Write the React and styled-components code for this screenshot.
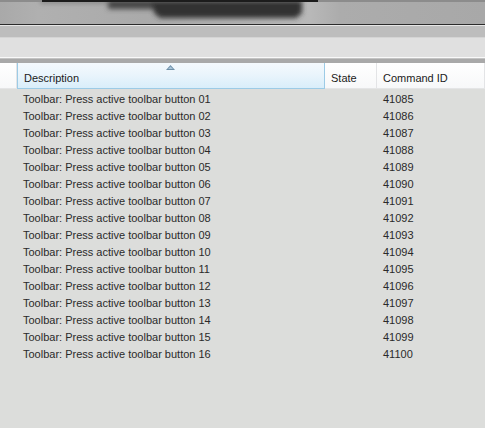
import React from "react";
import styled, { createGlobalStyle } from "styled-components";

const GlobalStyle = createGlobalStyle`
  html, body {
    margin: 0;
    padding: 0;
    background: #dcdddb;
  }
  body {
    font-family: "Liberation Sans", Arial, sans-serif;
  }
`;

const Window = styled.div`
  width: 485px;
  height: 428px;
  display: flex;
  flex-direction: column;
  background: #dcdddb;
  overflow: hidden;
`;

const TopEdge = styled.div`
  height: 2px;
  display: flex;
  background: #8c8c8c;
`;

const EdgeBar = styled.div`
  margin-left: 42px;
  width: 276px;
  height: 2px;
  background: #1c1c1c;
`;

const BlurBand = styled.div`
  height: 22px;
  background: linear-gradient(
    90deg,
    #a9a9a9 0%,
    #b0b0b0 8%,
    #aaaaaa 30%,
    #b8b8b8 64%,
    #acacac 70%,
    #a8a8a8 100%
  );
  overflow: hidden;
`;

const Line = styled.div`
  height: ${p => p.$h || 1}px;
  background: ${p => p.$c};
`;

const Header = styled.div`
  height: 25px;
  display: flex;
  background: linear-gradient(#ffffff, #f7f8f9);
  border-bottom: 1px solid #e4e5e6;
  font-size: 11px;
  color: #1a1a1a;
`;

const HeadCell = styled.div`
  position: relative;
  width: ${p => p.$w}px;
  flex: ${p => (p.$grow ? 1 : "none")};
  display: flex;
  align-items: center;
  padding: 5px 0 0 6px;
  box-sizing: border-box;
  border-right: 1px solid ${p => (p.$active ? "#9ccbe6" : "#e3e4e6")};
  ${p =>
    p.$active &&
    `
    background: linear-gradient(#f4f9fd 0%, #eaf5fc 45%, #d9eefa 100%);
    border-left: 1px solid #9ccbe6;
    border-bottom: 1px solid #9ccbe6;
    margin-bottom: -1px;
  `}
`;

const SortArrow = styled.svg`
  position: absolute;
  top: 2px;
  left: 148px;
`;

const List = styled.div`
  display: flex;
  flex-direction: column;
  padding-top: 1px;
`;

const Row = styled.div`
  height: 17px;
  display: flex;
  align-items: center;
  font-size: 11px;
  color: #2a2a2a;
`;

const Cell = styled.div`
  width: ${p => p.$w}px;
  padding-left: ${p => p.$pl || 0}px;
  box-sizing: border-box;
  white-space: nowrap;
`;

const rows = Array.from({ length: 16 }, (_, i) => ({
  name: `Toolbar: Press active toolbar button ${String(i + 1).padStart(2, "0")}`,
  id: 41085 + i
}));

const Smudge = () => (
  <svg width="485" height="22" viewBox="0 0 485 22">
    <defs>
      <filter id="b" x="-20%" y="-50%" width="140%" height="200%">
        <feGaussianBlur stdDeviation="2.6" />
      </filter>
    </defs>
    <g filter="url(#b)">
      <path d="M108 -2 H302 V7 H108 Z" fill="#454545" />
      <path d="M152 0 H302 V11 L296 16 H160 L154 11 Z" fill="#333" />
      <rect x="40" y="-2" width="68" height="3" fill="#777" />
    </g>
  </svg>
);

export default function App() {
  return (
    <>
      <GlobalStyle />
      <Window>
        <TopEdge>
          <EdgeBar />
        </TopEdge>
        <BlurBand>
          <Smudge />
        </BlurBand>
        <Line $c="#2b2b2b" />
        <Line $c="#e6e6e6" />
        <Line $c="#bdbdbd" $h={11} />
        <Line $c="#d4d4d4" />
        <Line $c="#e0e0e0" $h={19} />
        <Line $c="#f9f9f9" />
        <Line $c="#c4c4c4" />
        <Line $c="#a9a9a9" $h={4} />
        <Header>
          <HeadCell $w={17} />
          <HeadCell $w={308} $active>
            Description
            <SortArrow width="9" height="5" viewBox="0 0 9 5">
              <path d="M4.5 0 L9 5 H0 Z" fill="#6d8fa8" />
              <path d="M4.5 1.5 L7 4 H2 Z" fill="#a9c6da" />
            </SortArrow>
          </HeadCell>
          <HeadCell $w={52}>State</HeadCell>
          <HeadCell $grow>Command ID</HeadCell>
        </Header>
        <List>
          {rows.map(r => (
            <Row key={r.id}>
              <Cell $w={325} $pl={23}>{r.name}</Cell>
              <Cell $w={52} />
              <Cell $w={108} $pl={6}>{r.id}</Cell>
            </Row>
          ))}
        </List>
      </Window>
    </>
  );
}
